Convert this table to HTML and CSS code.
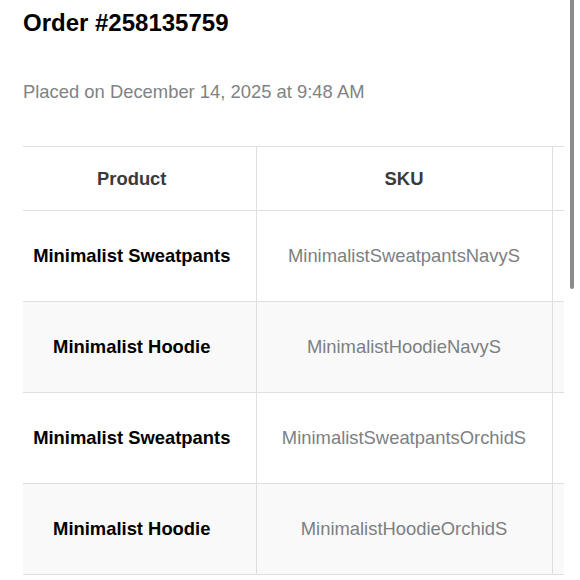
FILE: index.html
```html
<!DOCTYPE html>
<html lang="en">
<head>
<meta charset="utf-8">
<title>Order #258135759</title>
<link rel="stylesheet" href="styles.css">
</head>
<body>
<main class="page">
  <h1 class="title">Order #258135759</h1>
  <p class="placed">Placed on December 14, 2025 at 9:48 AM</p>
  <div class="table-wrap">
    <table class="items">
      <colgroup>
        <col class="c-product">
        <col class="c-sku">
        <col class="c-qty">
      </colgroup>
      <thead>
        <tr><th class="first">Product</th><th>SKU</th><th></th></tr>
      </thead>
      <tbody>
        <tr><td class="name first">Minimalist Sweatpants</td><td class="sku">MinimalistSweatpantsNavyS</td><td></td></tr>
        <tr><td class="name first">Minimalist Hoodie</td><td class="sku">MinimalistHoodieNavyS</td><td></td></tr>
        <tr><td class="name first">Minimalist Sweatpants</td><td class="sku">MinimalistSweatpantsOrchidS</td><td></td></tr>
        <tr><td class="name first">Minimalist Hoodie</td><td class="sku">MinimalistHoodieOrchidS</td><td></td></tr>
      </tbody>
    </table>
  </div>
</main>
<div class="scroll-thumb"></div>
</body>
</html>
```
FILE: styles.css
```css
html, body {
  margin: 0;
  padding: 0;
  background: #ffffff;
}
body {
  font-family: "Liberation Sans", Arial, sans-serif;
  overflow: hidden;
}
.page {
  padding: 9px 16px 0 23px;
}
.title {
  margin: 0;
  font-size: 24px;
  line-height: 28px;
  font-weight: 700;
  color: #000;
}
.placed {
  margin: 44px 0 0;
  font-size: 18.4px;
  line-height: 22px;
  color: #808285;
}
.table-wrap {
  margin-top: 43px;
  width: 541px;
  overflow: hidden;
}
.items {
  border-collapse: collapse;
  table-layout: fixed;
  width: 649px;
  font-size: 18.4px;
}
.c-product { width: 233px; }
.c-sku { width: 296px; }
.c-qty { width: 120px; }
.items th,
.items td {
  text-align: center;
  vertical-align: middle;
  border-top: 1px solid #dcdfe3;
  border-bottom: 1px solid #dcdfe3;
  border-right: 1px solid #dcdfe3;
  padding: 0 8px;
  white-space: nowrap;
}
.items .first {
  padding: 0 15px 0 0;
}
.items th {
  height: 63px;
  font-weight: 700;
  color: #3a3a3a;
}
.items td {
  height: 90px;
}
.items tbody tr:nth-child(even) td {
  background: #f9f9f9;
}
.name {
  font-weight: 700;
  color: #000;
}
.sku {
  color: #7d7f82;
}
.scroll-thumb {
  position: fixed;
  top: -20px;
  right: 6px;
  width: 4px;
  height: 309px;
  border-radius: 2px;
  background: #8a8a8a;
}
```
